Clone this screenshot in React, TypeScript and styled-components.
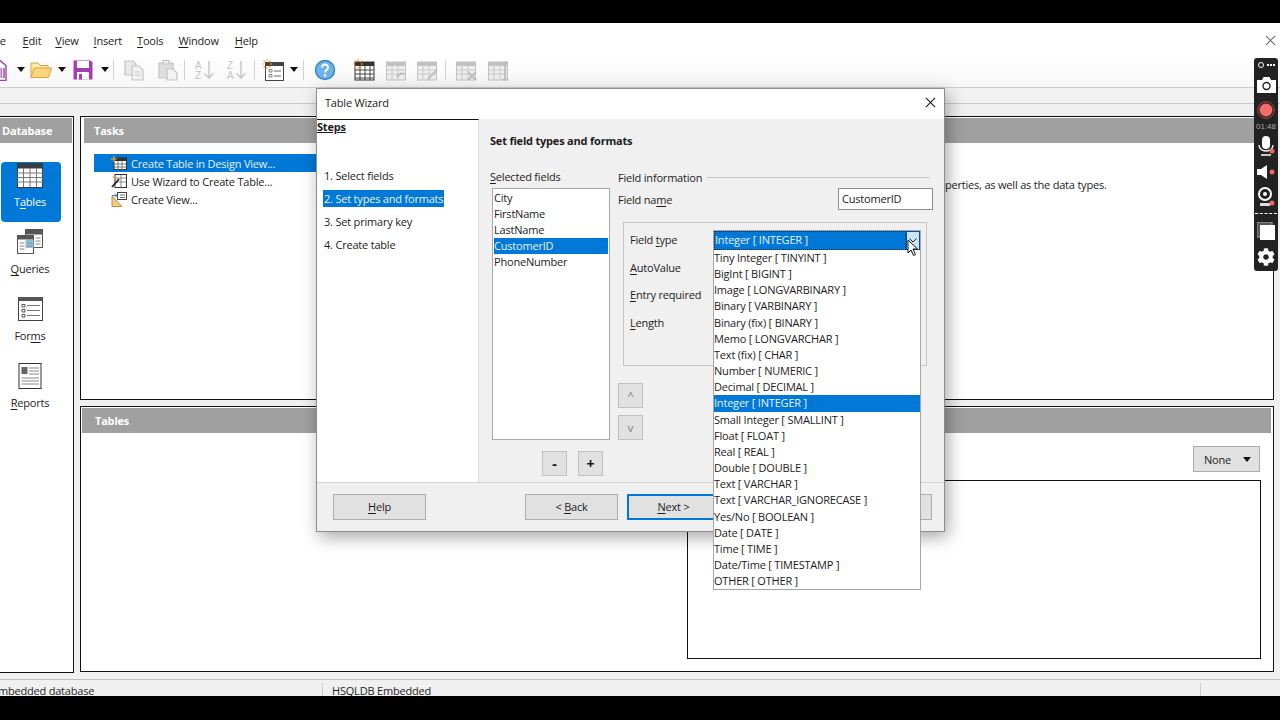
import * as React from 'react'
import styled, { createGlobalStyle } from 'styled-components'
import { FaCog } from 'react-icons/fa'

const Global = createGlobalStyle`
  html, body {
    margin: 0;
    padding: 0;
    background: #000;
  }
  * {
    box-sizing: border-box;
  }
`

const Page = styled.div`
  position: relative;
  width: 1280px;
  height: 720px;
  overflow: hidden;
  display: flex;
  flex-direction: column;
  background: #f0f0f0;
  color: #1c1c1c;
  font-family: 'Open Sans', 'Noto Sans', sans-serif;
  font-size: 11px;
  letter-spacing: -0.2px;
`

const BlackBar = styled.div<{ $h: number }>`
  flex: none;
  height: ${(p) => p.$h}px;
  background: #000;
`

const U = styled.span`
  text-decoration: underline;
  text-underline-offset: 2px;
  text-decoration-thickness: 1px;
`

const MenuBar = styled.div`
  flex: none;
  height: 32px;
  display: flex;
  align-items: center;
  background: #fff;
  padding: 3px 4px 0 0;
`

const MenuItem = styled.span<{ $gap: number }>`
  margin-left: ${(p) => p.$gap}px;
  white-space: nowrap;
`

const CloseMark = styled.span`
  margin-left: auto;
  display: flex;
`

const ToolBar = styled.div`
  flex: none;
  height: 33px;
  display: flex;
  align-items: center;
  padding-bottom: 3px;
  background: linear-gradient(#fff, #f7f7f7);
  border-bottom: 1px solid #cfcfcf;
`

const Tool = styled.span<{ $gap: number }>`
  flex: none;
  width: 22px;
  height: 22px;
  display: block;
  margin-left: ${(p) => p.$gap}px;
`

const DropTri = styled.span<{ $gap: number }>`
  flex: none;
  margin-left: ${(p) => p.$gap}px;
  width: 0;
  height: 0;
  border-left: 4px solid transparent;
  border-right: 4px solid transparent;
  border-top: 5px solid #111;
`

const ToolSep = styled.span<{ $gap: number }>`
  flex: none;
  margin-left: ${(p) => p.$gap}px;
  width: 1px;
  height: 20px;
  background: #d2d2d2;
`

const SubBar = styled.div`
  flex: none;
  height: 16px;
  background: #f2f2f2;
  border-bottom: 1px solid #c9c9c9;
`

const Workspace = styled.div`
  flex: 1;
  min-height: 0;
  display: flex;
  padding-top: 12px;
  gap: 6px;
`

const SidePanel = styled.div`
  flex: none;
  width: 74px;
  height: 557px;
  background: #fff;
  border: 1px solid #111;
  border-left: none;
  padding: 1px 1px 0 0;
`

const PanelHeader = styled.div`
  height: 25px;
  display: flex;
  align-items: center;
  background: #a0a0a0;
  color: #fff;
  font-weight: 700;
  padding-left: 10px;
`

const SideHeader = styled(PanelHeader)`
  padding-left: 2px;
`

const TablesHeader = styled(PanelHeader)`
  padding-left: 13px;
`

const SideList = styled.div`
  display: flex;
  flex-direction: column;
  padding-top: 19px;
  gap: 7px;
`

const SideItem = styled.div<{ $active?: boolean }>`
  width: 60px;
  height: 60px;
  margin-left: 1px;
  padding-right: 2px;
  border-radius: 4px;
  display: flex;
  flex-direction: column;
  align-items: center;
  justify-content: flex-start;
  background: ${(p) => (p.$active ? '#0078d7' : 'transparent')};
  color: ${(p) => (p.$active ? '#fff' : '#1c1c1c')};
  line-height: 16px;
  gap: 6px;
  svg {
    flex: none;
  }
`

const MainColumn = styled.div`
  flex: none;
  width: 1194px;
  display: flex;
  flex-direction: column;
  gap: 6px;
`

const TasksPanel = styled.div`
  height: 284px;
  background: #fff;
  border: 1px solid #111;
  padding: 1px 2px 0 3px;
`

const TablesPanel = styled.div`
  height: 266px;
  background: #fff;
  border: 1px solid #111;
  padding: 1px 2px 0 1px;
`

const TasksBody = styled.div`
  display: flex;
  padding: 11px 0 0 10px;
`

const TaskList = styled.div`
  flex: none;
  width: 400px;
  display: flex;
  flex-direction: column;
`

const TaskRow = styled.div<{ $active?: boolean }>`
  height: 18px;
  display: flex;
  align-items: center;
  gap: 4px;
  padding-left: 17px;
  background: ${(p) => (p.$active ? '#0078d7' : 'transparent')};
  color: ${(p) => (p.$active ? '#e8f3fc' : '#1c1c1c')};
  white-space: nowrap;
`

const TaskDescription = styled.div`
  margin-left: 451px;
  padding-top: 23px;
  white-space: nowrap;
`

const TablesBody = styled.div`
  display: flex;
  flex-direction: column;
  align-items: flex-end;
  padding: 13px 10px 0 0;
`

const NoneButton = styled.div`
  width: 67px;
  height: 26px;
  margin-right: 1px;
  display: flex;
  align-items: center;
  justify-content: space-between;
  padding: 0 8px 0 10px;
  background: #e1e1e1;
  border: 1px solid #adadad;
`

const Preview = styled.div`
  width: 574px;
  height: 179px;
  margin-top: 8px;
  background: #fff;
  border: 1px solid #111;
`

const StatusBar = styled.div`
  flex: none;
  height: 17px;
  display: flex;
  align-items: flex-start;
  background: #f0f0f0;
  border-top: 1px solid #bdbdbd;
  padding-top: 3px;
  overflow: hidden;
  line-height: 16px;
`

const StatusCell = styled.div<{ $w: number }>`
  flex: none;
  width: ${(p) => p.$w}px;
  height: 20px;
  white-space: nowrap;
  border-right: 1px solid #cdcdcd;
  padding-left: 9px;
`

const StatusFirst = styled(StatusCell)`
  padding-left: 0;
  margin-left: -8px;
`

/* dialog */
const Dialog = styled.div`
  position: absolute;
  left: 316px;
  top: 88px;
  width: 629px;
  height: 444px;
  display: flex;
  flex-direction: column;
  background: #f0f0f0;
  border: 1px solid #8c8c8c;
  box-shadow: 3px 5px 16px rgba(0, 0, 0, 0.35);
`

const DialogTitle = styled.div`
  flex: none;
  height: 30px;
  display: flex;
  align-items: center;
  justify-content: space-between;
  padding: 0 8px 3px;
  background: #fff;
`

const DialogBody = styled.div`
  flex: none;
  height: 363px;
  display: flex;
`

const StepsPane = styled.div`
  flex: none;
  width: 162px;
  background: #fff;
  border-top: 1px solid #111;
  border-right: 1px solid #d9d9d9;
`

const StepsTitle = styled.div`
  font-weight: 700;
  text-decoration: underline;
  line-height: 14px;
`

const StepsList = styled.div`
  display: flex;
  flex-direction: column;
  align-items: flex-start;
  margin-top: 33px;
  padding-left: 6px;
`

const StepItem = styled.div<{ $active?: boolean }>`
  height: 23px;
  line-height: 17px;
  display: flex;
  align-items: flex-start;
  span {
    padding: 0 1px;
    height: 17px;
    background: ${(p) => (p.$active ? '#0078d7' : 'transparent')};
    color: ${(p) => (p.$active ? '#e8f3fc' : '#1c1c1c')};
  }
`

const DialogContent = styled.div`
  flex: 1;
  padding: 14px 0 0 11px;
`

const Heading = styled.div`
  font-weight: 700;
  height: 16px;
  line-height: 16px;
`

const Columns = styled.div`
  display: flex;
  margin-top: 21px;
  gap: 8px;
`

const FieldsColumn = styled.div`
  flex: none;
  width: 120px;
`

const SmallLabel = styled.div`
  height: 14px;
  line-height: 14px;
  white-space: nowrap;
`

const FieldList = styled.div`
  width: 118px;
  height: 252px;
  margin: 4px 0 0 2px;
  padding: 1px;
  background: #fff;
  border: 1px solid #a8a8a8;
`

const FieldRow = styled.div<{ $active?: boolean }>`
  height: 16px;
  line-height: 16px;
  background: ${(p) => (p.$active ? '#0078d7' : 'transparent')};
  color: ${(p) => (p.$active ? '#e8f3fc' : '#1c1c1c')};
`

const PlusMinus = styled.div`
  display: flex;
  gap: 11px;
  margin: 11px 0 0 52px;
`

const SquareButton = styled.div<{ $strong?: boolean }>`
  width: 25px;
  height: 25px;
  display: flex;
  align-items: center;
  justify-content: center;
  background: #e1e1e1;
  border: 1px solid #c0c0c0;
  color: ${(p) => (p.$strong ? '#111' : '#777')};
  font-weight: ${(p) => (p.$strong ? 700 : 400)};
  font-size: ${(p) => (p.$strong ? 14 : 11)}px;
`

const InfoColumn = styled.div`
  flex: none;
  width: 315px;
`

const InfoHead = styled.div`
  height: 14px;
  display: flex;
  align-items: center;
  gap: 5px;
  padding-right: 3px;
  white-space: nowrap;
  &::after {
    content: '';
    flex: 1;
    height: 1px;
    background: #c8c8c8;
  }
`

const NameRow = styled.div`
  display: flex;
  align-items: center;
  justify-content: space-between;
  margin-top: 4px;
`

const NameInput = styled.div`
  width: 95px;
  height: 22px;
  line-height: 20px;
  padding-left: 3px;
  background: #fff;
  border: 1px solid #8f8f8f;
`

const FieldBox = styled.div`
  width: 304px;
  height: 144px;
  margin: 12px 0 0 5px;
  padding: 3px 0 0 6px;
  border: 1px solid #c4c4c4;
`

const BoxRow = styled.div`
  height: 27.6px;
  line-height: 27.6px;
  white-space: nowrap;
`

const UpDown = styled.div`
  display: flex;
  flex-direction: column;
  gap: 7px;
  margin-top: 17px;
`

const DialogFooter = styled.div`
  flex: 1;
  display: flex;
  align-items: flex-start;
  padding: 11px 0 0 16px;
  border-top: 1px solid #d4d4d4;
`

const FooterButton = styled.div<{ $gap?: number; $focus?: boolean }>`
  flex: none;
  width: 93px;
  height: 26px;
  margin-left: ${(p) => p.$gap ?? 0}px;
  padding-bottom: 2px;
  display: flex;
  align-items: center;
  justify-content: center;
  background: #e1e1e1;
  border: ${(p) => (p.$focus ? '2px solid #0078d7' : '1px solid #adadad')};
`

const CloseButton = styled.span`
  display: flex;
`

/* open combo box lies over the dialog */
const Combo = styled.div`
  position: absolute;
  left: 396px;
  top: 141px;
  width: 208px;
  z-index: 2;
  background: #fff;
  border: 1px solid #a6a6a6;
`

const ComboHead = styled.div`
  height: 19px;
  display: flex;
  background: #fff;
`

const ComboValue = styled.div`
  flex: 1;
  line-height: 16px;
  background: #0078d7;
  color: #e8f3fc;
  border: 1px dotted #0b2a4a;
`

const ComboArrow = styled.div`
  flex: none;
  width: 14px;
  display: flex;
  align-items: center;
  justify-content: center;
  background: #cce4f7;
  border: 1px solid #005499;
`

const ComboRow = styled.div<{ $active?: boolean }>`
  height: 16.16px;
  line-height: 16.16px;
  white-space: nowrap;
  background: ${(p) => (p.$active ? '#0078d7' : 'transparent')};
  color: ${(p) => (p.$active ? '#e8f3fc' : '#1c1c1c')};
`

const Cursor = styled.svg`
  position: absolute;
  left: 590px;
  top: 150px;
  z-index: 3;
`

/* screen recorder widget */
const Recorder = styled.div`
  position: absolute;
  left: 1254px;
  top: 58px;
  width: 24px;
  height: 213px;
  z-index: 4;
  display: flex;
  flex-direction: column;
  align-items: center;
  background: #222;
  border-radius: 3px;
  color: #fff;
`

const RecTime = styled.div`
  height: 9px;
  font-size: 8px;
  letter-spacing: 0;
  line-height: 9px;
  color: #a9a9a9;
  font-family: 'Liberation Sans', sans-serif;
`

const RecLine = styled.div`
  width: 22px;
  margin: 2px 0 3px;
  border-top: 1px dashed #fff;
`

const RecSlot = styled.div<{ $h: number }>`
  height: ${(p) => p.$h}px;
  display: flex;
  align-items: center;
  justify-content: center;
`

const NewIcon = () => (
  <svg width="22" height="22" viewBox="0 0 22 22">
    <path d="M4 1.5h11l6 5v15H4z" fill="#fff" stroke="#8e4a9e" strokeWidth="1.4" />
    <rect x="10" y="9" width="10" height="10" fill="#b57cc2" />
    <path d="M12.5 9v10M15 9v10M17.5 9v10" stroke="#fff" strokeWidth=".8" />
  </svg>
)

const FolderIcon = () => (
  <svg width="22" height="22" viewBox="0 0 22 22">
    <path d="M1 18.5V4h7l2 2.5h8V9" fill="#fde9b4" stroke="#d9a441" />
    <path d="M1 18.5 4 9h17.5l-3 9.5z" fill="#fbd67a" stroke="#d9a441" />
  </svg>
)

const SaveIcon = () => (
  <svg width="22" height="22" viewBox="0 0 22 22">
    <path d="M1.5 1.5h17l2 2v17h-19z" fill="#a33fb5" />
    <rect x="5" y="2" width="12" height="7" fill="#fff" />
    <rect x="5" y="13" width="12" height="7.5" fill="#fff" />
    <rect x="7" y="15" width="3" height="5.5" fill="#a33fb5" />
  </svg>
)

const CopyIcon = () => (
  <svg width="22" height="22" viewBox="0 0 22 22" fill="#e9e9e9" stroke="#c3c3c3" strokeWidth="1.2">
    <path d="M2 2h8l3 3v11H2z" />
    <path d="M9 7h7l4 4v10H9z" fill="#f2f2f2" />
    <path d="M11.5 13h6M11.5 16h6" />
  </svg>
)

const PasteIcon = () => (
  <svg width="22" height="22" viewBox="0 0 22 22" fill="#dedede" stroke="#c3c3c3" strokeWidth="1.2">
    <path d="M2 4h14v15H2z" />
    <path d="M6 5V1.5h6V5z" fill="#efefef" />
    <path d="M10 10h6l4 4v7H10z" fill="#f2f2f2" />
  </svg>
)

const SortLetter = styled.text`
  font-family: 'Liberation Sans', sans-serif;
  font-size: 10px;
  fill: #c4c4c4;
`

const SortIcon = ({ top, bottom }: { top: string; bottom: string }) => (
  <svg width="22" height="22" viewBox="0 0 22 22">
    <SortLetter x="1" y="10">{top}</SortLetter>
    <SortLetter x="1" y="20">{bottom}</SortLetter>
    <path d="M15 2v17M10.5 14.5 15 19l4.5-4.5" fill="none" stroke="#c4c4c4" strokeWidth="1.4" />
  </svg>
)

const Spark = () => (
  <path d="M5 0v2M5 8v2M0 5h2M8 5h2M1.5 1.5 3 3M7 7l1.5 1.5M8.5 1.5 7 3M3 7 1.5 8.5" stroke="#f2a93b" strokeWidth="1.2" />
)

const FormIcon = () => (
  <svg width="22" height="22" viewBox="0 0 22 22">
    <rect x="3.5" y="3.5" width="18" height="18" fill="#fff" stroke="#444" />
    <rect x="3" y="3" width="19" height="4" fill="#444" />
    <path d="M7 10.5h3v2.500H7zM7 15.500h3v2.500H7z" fill="#fff" stroke="#666" strokeWidth=".8" />
    <path d="M12 12h7M12 17h7" stroke="#666" />
    <Spark />
  </svg>
)

const HelpIcon = () => (
  <svg width="22" height="22" viewBox="0 0 22 22">
    <circle cx="11" cy="11" r="9.500" fill="#6db3e6" stroke="#2f86c9" strokeWidth="1.4" />
    <path d="M8 8.500c0-4 6-4 6 0 0 2.500-3 2.500-3 5" fill="none" stroke="#fff" strokeWidth="1.800" />
    <circle cx="11" cy="16.500" r="1.200" fill="#fff" />
  </svg>
)

const GridIcon = ({ color, spark }: { color: string; spark?: boolean }) => (
  <svg width="22" height="22" viewBox="0 0 22 22">
    <rect x="2" y="3" width="19" height="18" fill="#fff" stroke={color} />
    <rect x="2" y="3" width="19" height="4" fill={color} />
    <path d="M2 11h19M2 15h19M2 19h19M7 7v14M12 7v14M17 7v14" stroke={color} strokeWidth=".9" />
    {spark && <Spark />}
  </svg>
)

const TableEditIcon = ({ extra }: { extra: string }) => (
  <svg width="22" height="22" viewBox="0 0 22 22">
    <rect x="1.500" y="3" width="19" height="18" fill="#eee" stroke="#c2c2c2" />
    <rect x="1.500" y="3" width="19" height="4" fill="#c2c2c2" />
    <path d="M1.500 11h19M1.500 15h19M7 7v14M13 7v14" stroke="#c9c9c9" />
    <path d={extra} fill="none" stroke="#bdbdbd" strokeWidth="1.800" />
  </svg>
)

const SideGrid = () => (
  <svg width="26" height="26" viewBox="0 0 26 26">
    <rect x=".5" y="1.500" width="25" height="24" fill="#fff" stroke="#3c3c3c" />
    <rect x=".5" y="1.500" width="25" height="5" fill="#3c3c3c" />
    <path d="M0 11h26M0 15.500h26M0 20h26M6.500 6v19M13 6v19M19.500 6v19" stroke="#777" />
  </svg>
)

const QueriesIcon = () => (
  <svg width="26" height="26" viewBox="0 0 26 26">
    <rect x="8.500" y=".5" width="17" height="18" fill="#fff" stroke="#555" />
    <rect x="8.500" y=".5" width="17" height="5" fill="#555" />
    <rect x=".5" y="6.500" width="16" height="18" fill="#fff" stroke="#555" />
    <rect x=".5" y="6.500" width="16" height="4" fill="#555" />
    <rect x="8.500" y="11" width="8" height="8" fill="#8cc0df" />
    <path d="M2.500 14h5M2.500 17h5M2.500 20h5M10 14h5M10 17h5M18.500 9h5M18.500 12h5M18.500 15h5" stroke="#888" />
  </svg>
)

const FormsIcon = () => (
  <svg width="26" height="26" viewBox="0 0 26 26">
    <rect x="1.500" y="1.500" width="24" height="23" fill="#fff" stroke="#444" />
    <rect x="1.500" y="1" width="24" height="4" fill="#555" />
    <path d="M5 8.500h3v2.500H5zM5 13.500h3V16H5zM5 18.500h3V21H5z" fill="none" stroke="#555" />
    <path d="M10 9.500h13M10 14.500h13M10 19.500h13" stroke="#777" />
  </svg>
)

const ReportsIcon = () => (
  <svg width="24" height="26" viewBox="0 0 24 26">
    <rect x="1" y=".5" width="22" height="25" fill="#fff" stroke="#333" />
    <rect x="3.500" y="4" width="6" height="7" fill="#666" />
    <path d="M11 5h10M11 8h10M11 11h10M3.500 15h17.500M3.500 18h17.500M3.500 21h17.500" stroke="#888" />
  </svg>
)

const DesignTaskIcon = () => (
  <svg width="16" height="14" viewBox="0 0 16 14">
    <rect x="3" y="2" width="12.500" height="11.500" fill="#fff" stroke="#333" />
    <rect x="3" y="2" width="12.500" height="3" fill="#333" />
    <path d="M3 8h12M3 11h12M7 5v9M11 5v9" stroke="#777" />
    <path d="M3 0v6M0 3h6" stroke="#f2a93b" strokeWidth="1.200" />
  </svg>
)

const WizardTaskIcon = () => (
  <svg width="16" height="14" viewBox="0 0 16 14">
    <rect x="4" y=".5" width="11.500" height="13" fill="#fff" stroke="#333" />
    <path d="M4 4h11M4 8h11M10 1v12" stroke="#888" />
    <path d="M1 13 8 5" stroke="#222" strokeWidth="1.800" />
    <path d="M1.500 3h3M3 1.500v3" stroke="#e9a53a" />
  </svg>
)

const ViewTaskIcon = () => (
  <svg width="16" height="15" viewBox="0 0 16 15">
    <path d="M1 14.500V4l10 10.500z" fill="#f3c88b" stroke="#c98a35" />
    <rect x="6.500" y=".5" width="9" height="7" fill="#fff" stroke="#444" />
    <path d="M1 3.500h5M4 1.500l2 2-2 2" fill="none" stroke="#2f86c9" />
    <path d="M9 3h5M9 5.500h5" stroke="#777" />
  </svg>
)

const XMark = ({ size, color }: { size: number; color: string }) => (
  <svg width={size} height={size} viewBox="0 0 12 12">
    <path d="M1 1l10 10M11 1 1 11" stroke={color} strokeWidth="1.100" fill="none" />
  </svg>
)

const fields = ['City', 'FirstName', 'LastName', 'CustomerID', 'PhoneNumber']

const steps = ['1. Select fields', '2. Set types and formats', '3. Set primary key', '4. Create table']

const fieldTypes = [
  'Tiny Integer [ TINYINT ]',
  'BigInt [ BIGINT ]',
  'Image [ LONGVARBINARY ]',
  'Binary [ VARBINARY ]',
  'Binary (fix) [ BINARY ]',
  'Memo [ LONGVARCHAR ]',
  'Text (fix) [ CHAR ]',
  'Number [ NUMERIC ]',
  'Decimal [ DECIMAL ]',
  'Integer [ INTEGER ]',
  'Small Integer [ SMALLINT ]',
  'Float [ FLOAT ]',
  'Real [ REAL ]',
  'Double [ DOUBLE ]',
  'Text [ VARCHAR ]',
  'Text [ VARCHAR_IGNORECASE ]',
  'Yes/No [ BOOLEAN ]',
  'Date [ DATE ]',
  'Time [ TIME ]',
  'Date/Time [ TIMESTAMP ]',
  'OTHER [ OTHER ]',
]

const App = () => {
  return (
    <Page>
      <Global />
      <BlackBar $h={23} />
      <MenuBar>
        <MenuItem $gap={-11}>File</MenuItem>
        <MenuItem $gap={17}><U>E</U>dit</MenuItem>
        <MenuItem $gap={14}><U>V</U>iew</MenuItem>
        <MenuItem $gap={15}><U>I</U>nsert</MenuItem>
        <MenuItem $gap={15}><U>T</U>ools</MenuItem>
        <MenuItem $gap={15}><U>W</U>indow</MenuItem>
        <MenuItem $gap={16}><U>H</U>elp</MenuItem>
        <CloseMark><XMark size={11} color="#666" /></CloseMark>
      </MenuBar>
      <ToolBar>
        <Tool $gap={-15}><NewIcon /></Tool>
        <DropTri $gap={10} />
        <Tool $gap={5}><FolderIcon /></Tool>
        <DropTri $gap={6} />
        <Tool $gap={6}><SaveIcon /></Tool>
        <DropTri $gap={7} />
        <ToolSep $gap={4} />
        <Tool $gap={9}><CopyIcon /></Tool>
        <Tool $gap={12}><PasteIcon /></Tool>
        <ToolSep $gap={5} />
        <Tool $gap={9}><SortIcon top="A" bottom="Z" /></Tool>
        <Tool $gap={10}><SortIcon top="Z" bottom="A" /></Tool>
        <ToolSep $gap={6} />
        <Tool $gap={7}><FormIcon /></Tool>
        <DropTri $gap={6} />
        <ToolSep $gap={5} />
        <Tool $gap={10}><HelpIcon /></Tool>
        <Tool $gap={17}><GridIcon color="#333" spark /></Tool>
        <Tool $gap={10}><TableEditIcon extra="M12 18c2-4 5-4 8-3" /></Tool>
        <Tool $gap={9}><TableEditIcon extra="M12 20 21 11" /></Tool>
        <ToolSep $gap={7} />
        <Tool $gap={9}><TableEditIcon extra="M13 13l8 8M21 13l-8 8" /></Tool>
        <Tool $gap={10}><TableEditIcon extra="M18 4v16M15.500 3.500h5M15.500 20.500h5" /></Tool>
      </ToolBar>
      <SubBar />
      <Workspace>
        <SidePanel>
          <SideHeader>Database</SideHeader>
          <SideList>
            <SideItem $active><SideGrid /><span>T<U>a</U>bles</span></SideItem>
            <SideItem><QueriesIcon /><span><U>Q</U>ueries</span></SideItem>
            <SideItem><FormsIcon /><span>For<U>m</U>s</span></SideItem>
            <SideItem><ReportsIcon /><span><U>R</U>eports</span></SideItem>
          </SideList>
        </SidePanel>
        <MainColumn>
          <TasksPanel>
            <PanelHeader>Tasks</PanelHeader>
            <TasksBody>
              <TaskList>
                <TaskRow $active><DesignTaskIcon />Create Table in Design View...</TaskRow>
                <TaskRow><WizardTaskIcon />Use Wizard to Create Table...</TaskRow>
                <TaskRow><ViewTaskIcon />Create View...</TaskRow>
              </TaskList>
              <TaskDescription>perties, as well as the data types.</TaskDescription>
            </TasksBody>
          </TasksPanel>
          <TablesPanel>
            <TablesHeader>Tables</TablesHeader>
            <TablesBody>
              <NoneButton>None<DropTri $gap={0} /></NoneButton>
              <Preview />
            </TablesBody>
          </TablesPanel>
        </MainColumn>
      </Workspace>
      <StatusBar>
        <StatusFirst $w={331}>Embedded database</StatusFirst>
        <StatusCell $w={878}>HSQLDB Embedded</StatusCell>
      </StatusBar>
      <BlackBar $h={24} />

      <Dialog>
        <DialogTitle>
          Table Wizard
          <CloseButton><XMark size={11} color="#111" /></CloseButton>
        </DialogTitle>
        <DialogBody>
          <StepsPane>
            <StepsTitle>Steps</StepsTitle>
            <StepsList>
              {steps.map((s, i) => (
                <StepItem key={s} $active={i === 1}><span>{s}</span></StepItem>
              ))}
            </StepsList>
          </StepsPane>
          <DialogContent>
            <Heading>Set field types and formats</Heading>
            <Columns>
              <FieldsColumn>
                <SmallLabel><U>S</U>elected fields</SmallLabel>
                <FieldList>
                  {fields.map((f) => (
                    <FieldRow key={f} $active={f === 'CustomerID'}>{f}</FieldRow>
                  ))}
                </FieldList>
                <PlusMinus>
                  <SquareButton $strong>-</SquareButton>
                  <SquareButton $strong>+</SquareButton>
                </PlusMinus>
              </FieldsColumn>
              <InfoColumn>
                <InfoHead>Field information</InfoHead>
                <NameRow>
                  <span>Field na<U>m</U>e</span>
                  <NameInput>CustomerID</NameInput>
                </NameRow>
                <FieldBox>
                  <BoxRow>Field <U>t</U>ype</BoxRow>
                  <BoxRow><U>A</U>utoValue</BoxRow>
                  <BoxRow><U>E</U>ntry required</BoxRow>
                  <BoxRow><U>L</U>ength</BoxRow>
                </FieldBox>
                <UpDown>
                  <SquareButton>^</SquareButton>
                  <SquareButton>v</SquareButton>
                </UpDown>
              </InfoColumn>
            </Columns>
          </DialogContent>
        </DialogBody>
        <DialogFooter>
          <FooterButton><span><U>H</U>elp</span></FooterButton>
          <FooterButton $gap={99}><span>&lt; <U>B</U>ack</span></FooterButton>
          <FooterButton $gap={9} $focus><span><U>N</U>ext &gt;</span></FooterButton>
          <FooterButton $gap={119} />
        </DialogFooter>
        <Combo>
          <ComboHead>
            <ComboValue>Integer [ INTEGER ]</ComboValue>
            <ComboArrow>
              <svg width="8" height="5" viewBox="0 0 8 5">
                <path d="M.5.5 4 4 7.500.5" fill="none" stroke="#222" />
              </svg>
            </ComboArrow>
          </ComboHead>
          {fieldTypes.map((t) => (
            <ComboRow key={t} $active={t === 'Integer [ INTEGER ]'}>{t}</ComboRow>
          ))}
        </Combo>
        <Cursor width="12" height="18" viewBox="0 0 12 18">
          <path d="M1 1v13l3-3 2.500 5.500 2-1L6 10h4.500z" fill="#fff" stroke="#111" strokeWidth="1" />
        </Cursor>
      </Dialog>

      <Recorder>
        <RecSlot $h={14}>
          <svg width="20" height="8" viewBox="0 0 20 8">
            <circle cx="5" cy="4" r="2.500" fill="none" stroke="#fff" />
            <path d="M11 4h8" stroke="#fff" strokeWidth="2" strokeDasharray="2 1" />
          </svg>
        </RecSlot>
        <RecSlot $h={26}>
          <svg width="19" height="16" viewBox="0 0 19 16">
            <path d="M0 3h5l1.500-3h6L14 3h5v13H0z" fill="#fff" />
            <circle cx="9.500" cy="9" r="3.500" fill="none" stroke="#222" strokeWidth="1.400" />
          </svg>
        </RecSlot>
        <RecSlot $h={24}>
          <svg width="18" height="18" viewBox="0 0 18 18">
            <circle cx="9" cy="9" r="8.300" fill="none" stroke="#b44" />
            <circle cx="9" cy="9" r="6.500" fill="#f26c6c" />
          </svg>
        </RecSlot>
        <RecTime>01:48</RecTime>
        <RecSlot $h={30}>
          <svg width="18" height="20" viewBox="0 0 18 20">
            <rect x="5" y="0" width="8" height="13" rx="4" fill="#fff" />
            <path d="M2 9c0 8 14 8 14 0" fill="none" stroke="#fff" strokeWidth="1.300" />
            <path d="M4 19h10" stroke="#fff" strokeWidth="1.500" />
            <circle cx="15" cy="15" r="2.500" fill="#e66" />
          </svg>
        </RecSlot>
        <RecSlot $h={22}>
          <svg width="18" height="14" viewBox="0 0 18 14">
            <path d="M0 4h4l6-4v14l-6-4H0z" fill="#fff" />
            <circle cx="15" cy="7" r="2.500" fill="#e66" />
          </svg>
        </RecSlot>
        <RecSlot $h={28}>
          <svg width="18" height="20" viewBox="0 0 18 20">
            <circle cx="8" cy="7" r="6" fill="none" stroke="#fff" strokeWidth="2" />
            <circle cx="8" cy="7" r="2" fill="#fff" />
            <path d="M3 16h10v3H3z" fill="#ddd" />
            <circle cx="15" cy="16" r="2.500" fill="#e66" />
          </svg>
        </RecSlot>
        <RecLine />
        <RecSlot $h={28}>
          <svg width="18" height="18" viewBox="0 0 18 18">
            <rect x="0" y="0" width="15" height="15" fill="#555" stroke="#aaa" />
            <rect x="3" y="3" width="15" height="15" fill="#fff" />
          </svg>
        </RecSlot>
        <RecSlot $h={24}>
          <FaCog size={18} color="#fff" />
        </RecSlot>
      </Recorder>
    </Page>
  )
}

export default App
